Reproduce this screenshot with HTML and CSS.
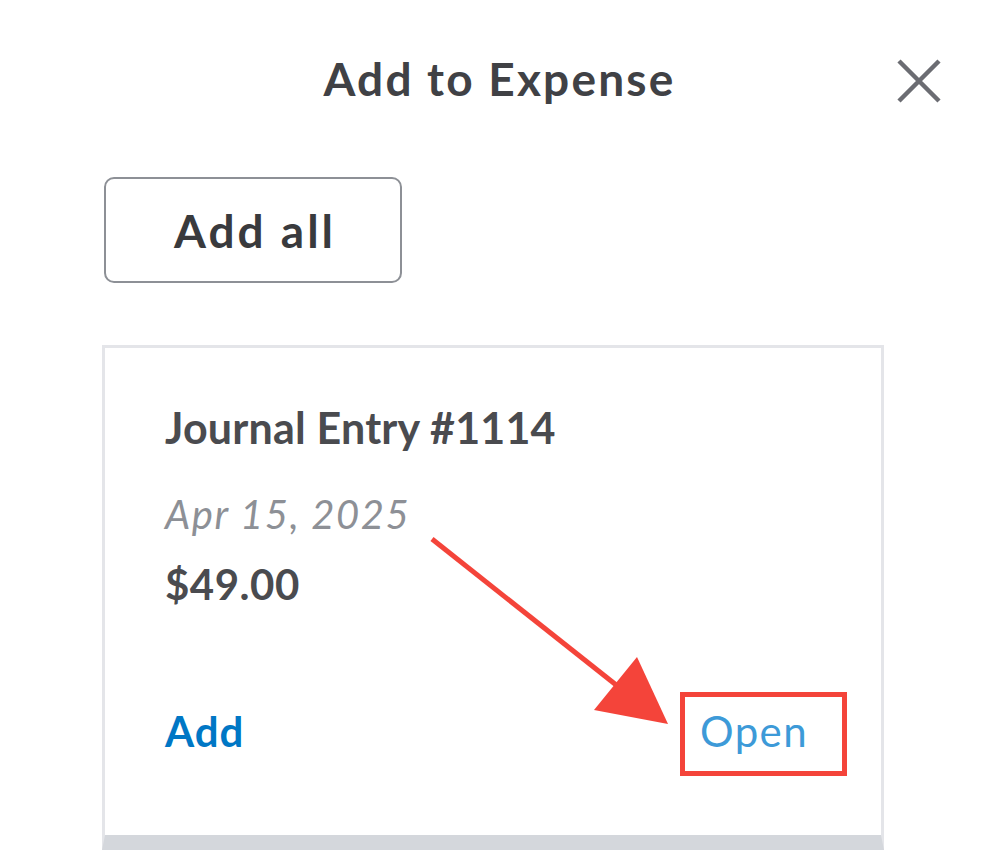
FILE: index.html
```html
<!DOCTYPE html>
<html lang="en">
<head>
    <meta charset="UTF-8">
    <meta name="viewport" content="width=device-width, initial-scale=1.0">
    <title>Add to Expense</title>
    <link rel="stylesheet" href="styles.css">
</head>
<body>
    <div class="panel">
        <header class="panel-head">
            <h1>Add to Expense</h1>
            <button type="button" class="close" aria-label="Close">
                <svg width="46" height="46" viewBox="0 0 46 46">
                    <path d="M3 3 L43 43 M43 3 L3 43" stroke="#6b6c72" stroke-width="4.5" fill="none"/>
                </svg>
            </button>
        </header>

        <div class="panel-body">
            <button type="button" class="add-all">Add all</button>

            <div class="card">
                <div class="card-title">Journal Entry #1114</div>
                <div class="card-date">Apr 15, 2025</div>
                <div class="card-amount">$49.00</div>
                <div class="card-actions">
                    <a href="#" class="link-add">Add</a>
                    <span class="highlight"><a href="#" class="link-open">Open</a></span>
                </div>
            </div>
        </div>

        <!-- annotation arrow -->
        <svg class="arrow" width="999" height="865" viewBox="0 0 999 865">
            <line x1="432" y1="539" x2="620" y2="688" stroke="#f4443a" stroke-width="5"/>
            <polygon points="637,657 594,710 668,724" fill="#f4443a"/>
        </svg>
    </div>
</body>
</html>
```

FILE: styles.css
```css
body {
    margin: 0;
    background-color: #fff;
    font-family: Lato, "Open Sans", sans-serif;
    color: #393a3d;
}

.panel {
    position: relative;
    width: 999px;
    height: 865px;
    overflow: hidden;
}

.panel-head {
    display: flex;
    align-items: center;
    justify-content: center;
    position: relative;
    height: 160px;
}

.panel-head h1 {
    margin: 0;
    font-size: 46px;
    font-weight: 700;
    letter-spacing: 2.2px;
    color: #404145;
    position: relative;
    top: -2px;
}

.close {
    position: absolute;
    right: 57px;
    top: 58px;
    padding: 0;
    border: none;
    background: none;
    cursor: pointer;
}

.close svg {
    display: block;
}

.panel-body {
    padding: 17px 0 0 102px;
}

.add-all {
    display: block;
    width: 298px;
    height: 106px;
    margin-left: 2px;
    padding: 0 0 0 4px;
    background-color: #fff;
    border: 2px solid #8d9096;
    border-radius: 10px;
    font-family: Lato, sans-serif;
    font-size: 46px;
    font-weight: 700;
    letter-spacing: 3px;
    color: #393a3d;
    cursor: pointer;
}

.card {
    width: 782px;
    box-sizing: border-box;
    margin-top: 62px;
    padding: 50px 0 59px 60px;
    background-color: #fff;
    border: 3px solid #e4e5e9;
    border-bottom: 15px solid #d4d7dc;
}

.card-title {
    font-size: 43px;
    font-weight: 700;
    color: #4a4b4f;
    line-height: 60px;
    letter-spacing: 0.2px;
}

.card-date {
    margin-top: 31px;
    font-size: 40px;
    font-style: italic;
    letter-spacing: 1.6px;
    color: #8d9096;
    line-height: 50px;
}

.card-amount {
    margin-top: 20px;
    font-size: 42px;
    font-weight: 700;
    letter-spacing: 0.5px;
    color: #4a4b4f;
    line-height: 50px;
}

.card-actions {
    display: flex;
    justify-content: space-between;
    align-items: baseline;
    margin-top: 83px;
    padding-right: 34px;
}

.card-actions a {
    text-decoration: none;
    font-size: 42px;
}

.link-add {
    font-weight: 700;
    letter-spacing: 1px;
    color: #0077c5;
}

.link-open {
    letter-spacing: 1.4px;
    color: #3d9ad8;
}

.highlight {
    display: inline-block;
    padding: 9px 34px 15px 15px;
    border: 5px solid #f4443a;
}

.arrow {
    position: absolute;
    left: 0;
    top: 0;
    pointer-events: none;
}
```
